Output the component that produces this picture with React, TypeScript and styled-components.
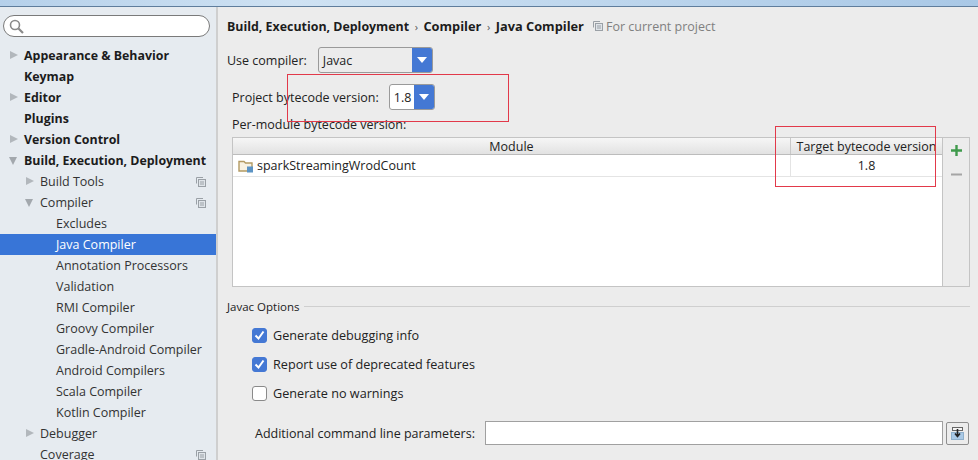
import React from "react";
import styled, { createGlobalStyle } from "styled-components";

const GlobalStyle = createGlobalStyle`
  html, body {
    margin: 0;
    padding: 0;
    background: #ececec;
    overflow: hidden;
  }
  * { box-sizing: border-box; }
`;

const Window = styled.div`
  width: 978px;
  height: 460px;
  position: relative;
  overflow: hidden;
  display: flex;
  flex-direction: column;
  font-family: "Open Sans", "Noto Sans", sans-serif;
  font-size: 12.5px;
  color: #222;
`;

const TitleStrip = styled.div`
  height: 7px;
  flex: none;
  background: linear-gradient(90deg, #b5d0ea, #cfe2f3 30%, #a9c8e6 100%);
  border-bottom: 1px solid #5f7d9c;
`;

const Body = styled.div`
  flex: 1;
  display: flex;
  min-height: 0;
`;

const Sidebar = styled.div`
  width: 218px;
  flex: none;
  background: #e6ebf0;
  border-right: 2px solid #cfcfcf;
  padding-top: 8px;
  overflow: hidden;
`;

const SearchBox = styled.div`
  height: 22px;
  width: 207px;
  margin: 0 0 8px 3px;
  background: #fff;
  border: 1px solid #7a7a7a;
  border-radius: 11px;
  display: flex;
  align-items: center;
  padding-left: 4px;
  color: #777;
`;

const TreeRow = styled.div<{ $depth: number; $selected?: boolean; $bold?: boolean }>`
  height: 21px;
  flex: none;
  display: flex;
  align-items: center;
  position: relative;
  padding-left: ${(p) => 24 + p.$depth * 16}px;
  padding-right: 10px;
  white-space: nowrap;
  font-weight: ${(p) => (p.$bold ? 700 : 400)};
  font-size: ${(p) => (p.$bold ? "12.4px" : "12.5px")};
  color: ${(p) => (p.$selected ? "#fff" : p.$bold ? "#1c1c1c" : "#333")};
  background: ${(p) => (p.$selected ? "#3875d7" : "transparent")};
`;

const TreeLabel = styled.span`
  flex: 1;
`;

const Arrow = styled.span<{ $depth: number; $open?: boolean }>`
  position: absolute;
  left: ${(p) => (p.$open ? 9 : 10) + p.$depth * 16}px;
  top: 6px;
  width: 0;
  height: 0;
  ${(p) =>
    p.$open
      ? `border-left: 4.5px solid transparent;
         border-right: 4.5px solid transparent;
         border-top: 8px solid #a3a8ad;
         margin-top: 1px;`
      : `border-top: 4.5px solid transparent;
         border-bottom: 4.5px solid transparent;
         border-left: 8px solid #b2b7bc;`}
`;

const Main = styled.div`
  flex: 1;
  min-width: 0;
  padding: 0 8px 0 9px;
  display: flex;
  flex-direction: column;
`;

const Breadcrumb = styled.div`
  display: flex;
  align-items: center;
  height: 20px;
  margin-top: 9px;
  font-weight: 700;
  font-size: 12.4px;
  color: #1c1c1c;
  white-space: nowrap;
`;

const CrumbTail = styled.span`
  font-size: 12.8px;
`;

const Chevron = styled.span`
  font-weight: 400;
  color: #555;
  font-size: 11px;
  margin: 0 5.5px;
`;

const ProjectHint = styled.span`
  display: flex;
  align-items: center;
  gap: 3px;
  margin-left: 9px;
  font-weight: 400;
  font-size: 12.5px;
  color: #808080;
`;

const FieldRow = styled.div<{ $indent?: number; $top: number }>`
  display: flex;
  align-items: center;
  margin-top: ${(p) => p.$top}px;
  padding-left: ${(p) => p.$indent ?? 0}px;
  white-space: nowrap;
`;

const Combo = styled.div<{ $width: number; $light?: boolean; $gap: number }>`
  width: ${(p) => p.$width}px;
  height: 26px;
  margin-left: ${(p) => p.$gap}px;
  display: flex;
  border: 1px solid #9a9a9a;
  border-radius: 3px;
  overflow: hidden;
  background: ${(p) => (p.$light ? "#fff" : "#ececec")};
`;

const ComboValue = styled.div`
  flex: 1;
  display: flex;
  align-items: center;
  padding-left: 4px;
`;

const ComboButton = styled.div`
  width: 20px;
  background: #4478d4;
  display: flex;
  align-items: center;
  justify-content: center;

  &::after {
    content: "";
    border-left: 5px solid transparent;
    border-right: 5px solid transparent;
    border-top: 6px solid #fff;
  }
`;

const SubLabel = styled.div`
  margin: 6px 0 3px 5px;
  height: 18px;
  line-height: 18px;
`;

const TableWrap = styled.div`
  display: flex;
  margin-left: 5px;
  margin-right: 0;
  height: 150px;
  border: 1px solid #c4c4c4;
`;

const Table = styled.div`
  flex: 1;
  background: #fff;
  border-right: 1px solid #c4c4c4;
  display: flex;
  flex-direction: column;
`;

const TableHead = styled.div`
  height: 17px;
  display: flex;
  background: linear-gradient(#f6f6f6, #e2e2e2);
  border-bottom: 1px solid #bcbcbc;
`;

const HeadCell = styled.div<{ $width?: number }>`
  ${(p) => (p.$width ? `width: ${p.$width}px;` : "flex: 1;")}
  display: flex;
  align-items: center;
  justify-content: center;
  white-space: nowrap;
  & + & { border-left: 1px solid #c8c8c8; }
`;

const TableRow = styled.div`
  height: 22px;
  display: flex;
  border-bottom: 1px solid #e4e4e4;
`;

const ModuleCell = styled.div`
  flex: 1;
  display: flex;
  align-items: center;
  gap: 3px;
  padding-left: 5px;
`;

const VersionCell = styled.div`
  width: 152px;
  border-left: 1px solid #e4e4e4;
  display: flex;
  align-items: center;
  justify-content: center;
`;

const TableTools = styled.div`
  width: 26px;
  display: flex;
  flex-direction: column;
  align-items: center;
  padding-top: 6px;
  gap: 11px;
`;

const SectionTitle = styled.div`
  display: flex;
  align-items: center;
  gap: 4px;
  margin-top: 10px;
  height: 18px;
  font-size: 11.5px;

  &::after {
    content: "";
    flex: 1;
    height: 1px;
    background: #cfcfcf;
  }
`;

const CheckRow = styled.div<{ $top: number }>`
  display: flex;
  align-items: center;
  gap: 6px;
  margin: ${(p) => p.$top}px 0 0 25px;
  height: 18px;
  font-size: 12.65px;
  white-space: nowrap;
`;

const CheckBox = styled.span<{ $checked?: boolean }>`
  width: 15px;
  height: 15px;
  border-radius: 3px;
  display: flex;
  align-items: center;
  justify-content: center;
  background: ${(p) => (p.$checked ? "#4478d4" : "#fff")};
  border: 1px solid ${(p) => (p.$checked ? "#4478d4" : "#8a8a8a")};
`;

const ParamInput = styled.div`
  width: 458px;
  height: 24px;
  margin-left: 10px;
  background: #fff;
  border: 1px solid #a0a0a0;
`;

const BrowseButton = styled.div`
  width: 23px;
  height: 23px;
  margin-left: 3px;
  border: 1px solid #8e8e8e;
  border-radius: 2px;
  display: flex;
  align-items: center;
  justify-content: center;
`;

const RedMark = styled.div<{ $x: number; $y: number; $w: number; $h: number }>`
  position: absolute;
  left: ${(p) => p.$x}px;
  top: ${(p) => p.$y}px;
  width: ${(p) => p.$w}px;
  height: ${(p) => p.$h}px;
  border: 1px solid #e2394a;
  pointer-events: none;
`;

function SearchIcon() {
  return (
    <svg width="17" height="17" viewBox="0 0 17 17" fill="none" stroke="#8a8a8a">
      <circle cx="7" cy="7" r="4.5" strokeWidth="1.6" />
      <path d="M10.5 10.5 L15 15" strokeWidth="2.2" />
    </svg>
  );
}

function CopyIcon() {
  return (
    <svg width="10" height="10" viewBox="0 0 10 10" fill="none" stroke="#9aa0a6" strokeWidth="1">
      <path d="M0.5 6.5 V0.5 H7" />
      <rect x="2.5" y="2.5" width="7" height="7" fill="#dfe4e9" />
      <path d="M4 5 H8 M4 7 H8" />
    </svg>
  );
}

function FolderIcon() {
  return (
    <svg width="16" height="14" viewBox="0 0 16 14">
      <path d="M1 2.5 H6 L7.5 4 H14 V12 H1 Z" fill="#f7f1e2" stroke="#b39a63" strokeWidth="1.4" />
      <rect x="9" y="7.5" width="6" height="6" fill="#5b93c4" />
    </svg>
  );
}

function CheckMark() {
  return (
    <svg width="11" height="11" viewBox="0 0 11 11" fill="none" stroke="#fff" strokeWidth="2">
      <path d="M1.5 5.5 L4.5 8.5 L9.5 1.5" />
    </svg>
  );
}

function PlusIcon() {
  return (
    <svg width="13" height="13" viewBox="0 0 13 13" stroke="#3f9a4c" strokeWidth="2.4">
      <path d="M6.5 1 V12 M1 6.5 H12" />
    </svg>
  );
}

function MinusIcon() {
  return (
    <svg width="13" height="13" viewBox="0 0 13 13" stroke="#a5a5a5" strokeWidth="2">
      <path d="M1 6.5 H12" />
    </svg>
  );
}

function BrowseIcon() {
  return (
    <svg width="15" height="15" viewBox="0 0 15 15">
      <rect x="1.5" y="6.5" width="12" height="7" fill="#a9c9e6" stroke="#8fb0cc" />
      <rect x="2.5" y="1.5" width="10" height="3" fill="#f4f4f4" stroke="#666" />
      <path d="M7.5 3 V10 M5 7.5 L7.5 10.5 L10 7.5" stroke="#222" strokeWidth="1.6" fill="none" />
    </svg>
  );
}

type TreeItem = {
  label: string;
  depth: number;
  bold?: boolean;
  arrow?: "open" | "closed";
  copy?: boolean;
  selected?: boolean;
};

const TREE: TreeItem[] = [
  { label: "Appearance & Behavior", depth: 0, bold: true, arrow: "closed" },
  { label: "Keymap", depth: 0, bold: true },
  { label: "Editor", depth: 0, bold: true, arrow: "closed" },
  { label: "Plugins", depth: 0, bold: true },
  { label: "Version Control", depth: 0, bold: true, arrow: "closed" },
  { label: "Build, Execution, Deployment", depth: 0, bold: true, arrow: "open" },
  { label: "Build Tools", depth: 1, arrow: "closed", copy: true },
  { label: "Compiler", depth: 1, arrow: "open", copy: true },
  { label: "Excludes", depth: 2 },
  { label: "Java Compiler", depth: 2, selected: true },
  { label: "Annotation Processors", depth: 2 },
  { label: "Validation", depth: 2 },
  { label: "RMI Compiler", depth: 2 },
  { label: "Groovy Compiler", depth: 2 },
  { label: "Gradle-Android Compiler", depth: 2 },
  { label: "Android Compilers", depth: 2 },
  { label: "Scala Compiler", depth: 2 },
  { label: "Kotlin Compiler", depth: 2 },
  { label: "Debugger", depth: 1, arrow: "closed" },
  { label: "Coverage", depth: 1, copy: true },
];

export default function App() {
  return (
    <Window>
      <GlobalStyle />
      <TitleStrip />
      <Body>
        <Sidebar>
          <SearchBox>
            <SearchIcon />
          </SearchBox>
          {TREE.map((item) => (
            <TreeRow key={item.label} $depth={item.depth} $bold={item.bold} $selected={item.selected}>
              {item.arrow && <Arrow $depth={item.depth} $open={item.arrow === "open"} />}
              <TreeLabel>{item.label}</TreeLabel>
              {item.copy && <CopyIcon />}
            </TreeRow>
          ))}
        </Sidebar>
        <Main>
          <Breadcrumb>
            Build, Execution, Deployment
            <Chevron>›</Chevron>
            <CrumbTail>Compiler</CrumbTail>
            <Chevron>›</Chevron>
            <CrumbTail>Java Compiler</CrumbTail>
            <ProjectHint>
              <CopyIcon />
              For current project
            </ProjectHint>
          </Breadcrumb>
          <FieldRow $top={11}>
            Use compiler:
            <Combo $width={115} $gap={11}>
              <ComboValue>Javac</ComboValue>
              <ComboButton />
            </Combo>
          </FieldRow>
          <FieldRow $indent={5} $top={11}>
            Project bytecode version:
            <Combo $width={46} $gap={10} $light>
              <ComboValue>1.8</ComboValue>
              <ComboButton />
            </Combo>
          </FieldRow>
          <SubLabel>Per-module bytecode version:</SubLabel>
          <TableWrap>
            <Table>
              <TableHead>
                <HeadCell>Module</HeadCell>
                <HeadCell $width={152}>Target bytecode version</HeadCell>
              </TableHead>
              <TableRow>
                <ModuleCell>
                  <FolderIcon />
                  sparkStreamingWrodCount
                </ModuleCell>
                <VersionCell>1.8</VersionCell>
              </TableRow>
            </Table>
            <TableTools>
              <PlusIcon />
              <MinusIcon />
            </TableTools>
          </TableWrap>
          <SectionTitle>Javac Options</SectionTitle>
          <CheckRow $top={11}>
            <CheckBox $checked>
              <CheckMark />
            </CheckBox>
            Generate debugging info
          </CheckRow>
          <CheckRow $top={11}>
            <CheckBox $checked>
              <CheckMark />
            </CheckBox>
            Report use of deprecated features
          </CheckRow>
          <CheckRow $top={11}>
            <CheckBox />
            Generate no warnings
          </CheckRow>
          <FieldRow $indent={28} $top={19}>
            Additional command line parameters:
            <ParamInput />
            <BrowseButton>
              <BrowseIcon />
            </BrowseButton>
          </FieldRow>
        </Main>
      </Body>
      <RedMark $x={287} $y={74} $w={222} $h={48} />
      <RedMark $x={775} $y={126} $w={161} $h={61} />
    </Window>
  );
}
